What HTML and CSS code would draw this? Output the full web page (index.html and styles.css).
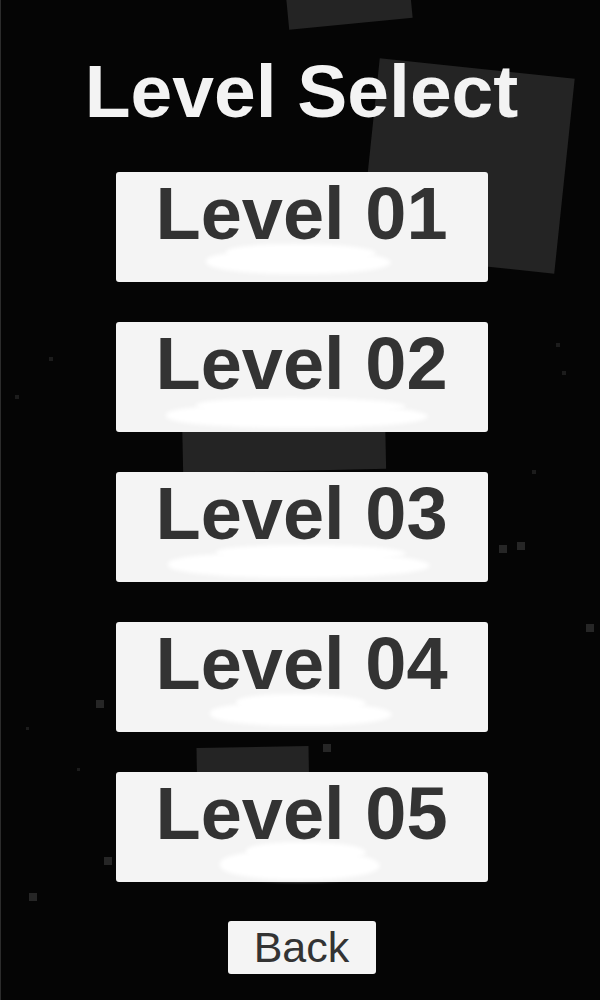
FILE: index.html
```html
<!DOCTYPE html>
<html lang="en">
<head>
<meta charset="utf-8">
<title>Level Select</title>
<link rel="stylesheet" href="styles.css">
</head>
<body>
<div class="screen">
  <div class="bg-layer" aria-hidden="true">
    <span class="shape shape-top"></span>
    <span class="shape shape-big"></span>
    <span class="shape shape-mid"></span>
    <span class="shape shape-low"></span>
    <span class="speck s1"></span>
    <span class="speck s2"></span>
    <span class="speck s3"></span>
    <span class="speck s4"></span>
    <span class="speck s5"></span>
    <span class="speck s6 big"></span>
    <span class="speck s7 big"></span>
    <span class="speck s8 big"></span>
    <span class="speck s9 big"></span>
    <span class="speck s10 big"></span>
    <span class="speck s11 big"></span>
    <span class="speck s12 big"></span>
    <span class="speck s13"></span>
    <span class="speck s14"></span>
  </div>

  <h1 class="title">Level Select</h1>

  <div class="levels">
    <button class="level-btn"><span class="level-label">Level 01</span><span class="smudge m1"></span><span class="smudge m1b"></span></button>
    <button class="level-btn"><span class="level-label">Level 02</span><span class="smudge m2"></span><span class="smudge m2b"></span></button>
    <button class="level-btn"><span class="level-label">Level 03</span><span class="smudge m3"></span><span class="smudge m3b"></span></button>
    <button class="level-btn"><span class="level-label">Level 04</span><span class="smudge m4"></span><span class="smudge m4b"></span></button>
    <button class="level-btn"><span class="level-label">Level 05</span><span class="smudge m5"></span><span class="smudge m5b"></span></button>
  </div>

  <button class="back-btn">Back</button>
</div>
</body>
</html>
```

FILE: styles.css
```css
* {
  box-sizing: border-box;
}

html, body {
  margin: 0;
  padding: 0;
  background: #050505;
}

body {
  font-family: "Liberation Sans", Arial, sans-serif;
}

.screen {
  position: relative;
  width: 600px;
  height: 1000px;
  overflow: hidden;
  background: #050505;
  border-left: 1px solid #2c2c2c;
  display: flex;
  flex-direction: column;
  align-items: center;
  padding-top: 54px;
  padding-left: 2px;
}

.bg-layer {
  position: absolute;
  inset: 0;
  z-index: 0;
}

.shape {
  position: absolute;
  background: #242424;
}

.shape-top {
  left: 282px;
  top: -100px;
  width: 124px;
  height: 124px;
  transform: rotate(-5.5deg);
}

.shape-big {
  left: 368px;
  top: 68px;
  width: 196px;
  height: 196px;
  transform: rotate(6deg);
}

.shape-mid {
  left: 181px;
  top: 360px;
  width: 203px;
  height: 111px;
  transform: rotate(-1.2deg);
}

.shape-low {
  left: 196px;
  top: 747px;
  width: 112px;
  height: 60px;
  transform: rotate(-1deg);
}

.speck {
  position: absolute;
  width: 4px;
  height: 4px;
  background: #1c1c1c;
}

.speck.big {
  width: 8px;
  height: 8px;
  background: #262626;
}

.s1 { left: 48px; top: 357px; }
.s2 { left: 14px; top: 395px; }
.s3 { left: 555px; top: 343px; }
.s4 { left: 561px; top: 371px; }
.s5 { left: 531px; top: 470px; }
.s6 { left: 498px; top: 545px; }
.s7 { left: 516px; top: 542px; width: 7px; height: 7px; }
.s8 { left: 585px; top: 624px; }
.s9 { left: 95px; top: 700px; }
.s10 { left: 322px; top: 744px; width: 7px; height: 7px; }
.s11 { left: 103px; top: 857px; width: 7px; height: 7px; }
.s12 { left: 28px; top: 893px; }
.s13 { left: 25px; top: 727px; width: 3px; height: 3px; }
.s14 { left: 76px; top: 768px; width: 3px; height: 3px; }

.title {
  position: relative;
  z-index: 1;
  margin: 0;
  font-size: 75px;
  line-height: 75px;
  font-weight: 700;
  color: #f3f3f3;
  white-space: nowrap;
}

.levels {
  position: relative;
  z-index: 1;
  margin-top: 43px;
  display: flex;
  flex-direction: column;
  gap: 40px;
}

.level-btn {
  position: relative;
  width: 372px;
  height: 110px;
  margin: 0;
  padding: 5px 0 0;
  border: none;
  border-radius: 3px;
  background: #f4f4f4;
  font-family: inherit;
  display: flex;
  justify-content: center;
  align-items: flex-start;
  overflow: visible;
}

.level-label {
  font-size: 74px;
  line-height: 74px;
  font-weight: 700;
  color: #333333;
  white-space: nowrap;
}

.smudge {
  position: absolute;
  background: #ffffff;
  border-radius: 45% 55% 50% 50%;
  filter: blur(2px);
}

.m1 { left: 90px; top: 78px; width: 185px; height: 24px; }
.m1b { left: 110px; top: 72px; width: 150px; height: 18px; }
.m2 { left: 50px; top: 82px; width: 262px; height: 24px; }
.m2b { left: 80px; top: 76px; width: 210px; height: 16px; }
.m3 { left: 52px; top: 80px; width: 262px; height: 26px; }
.m3b { left: 100px; top: 73px; width: 190px; height: 16px; }
.m4 { left: 94px; top: 80px; width: 182px; height: 24px; }
.m4b { left: 120px; top: 72px; width: 130px; height: 18px; }
.m5 { left: 104px; top: 78px; width: 160px; height: 30px; }
.m5b { left: 130px; top: 70px; width: 120px; height: 20px; }

.back-btn {
  position: relative;
  z-index: 1;
  margin-top: 39px;
  width: 148px;
  height: 53px;
  padding: 0;
  border: none;
  border-radius: 3px;
  background: #f4f4f4;
  font-family: inherit;
  font-size: 43px;
  line-height: 53px;
  font-weight: 400;
  color: #333333;
}
```
